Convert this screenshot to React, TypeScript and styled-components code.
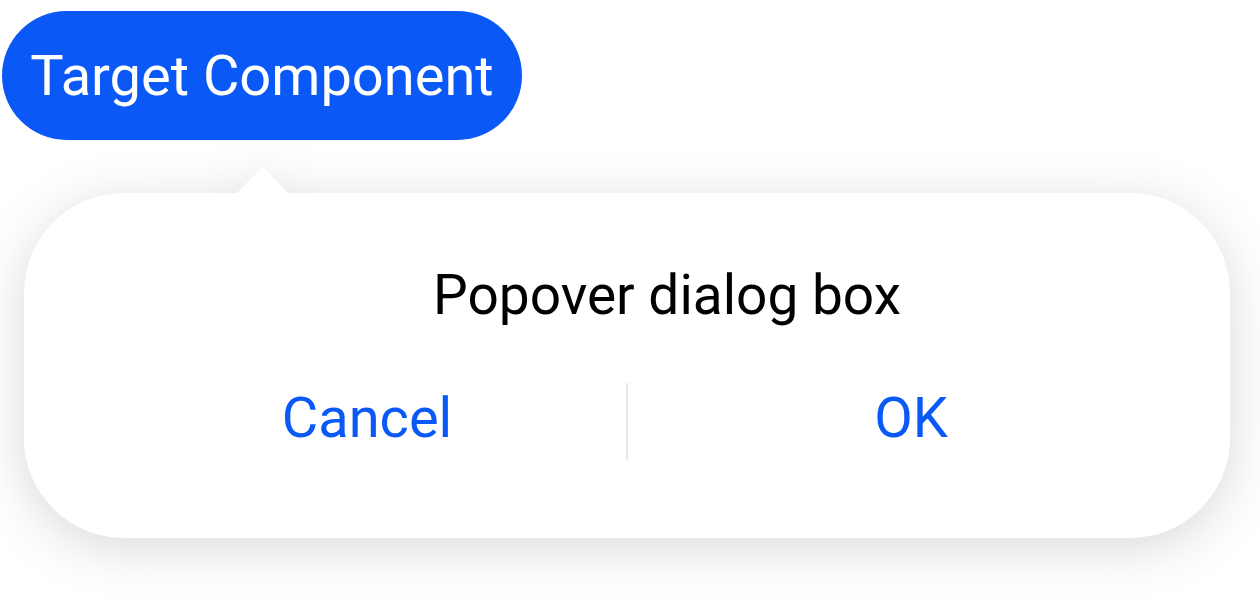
import styled, { createGlobalStyle } from 'styled-components';

const GlobalStyle = createGlobalStyle`
  body {
    margin: 0;
    background: #ffffff;
    font-family: Roboto, "Noto Sans", "Liberation Sans", sans-serif;
  }
`;

const Page = styled.div`
  min-height: 597px;
  box-sizing: border-box;
  padding: 11px 0 0 2px;
  display: flex;
  flex-direction: column;
  align-items: flex-start;
`;

const TargetButton = styled.button`
  width: 520px;
  height: 129px;
  border: none;
  border-radius: 65px;
  background: #0a59f7;
  color: #ffffff;
  font-family: inherit;
  font-size: 56px;
  padding: 0;
  cursor: pointer;
`;

const PopoverWrap = styled.div`
  position: relative;
  margin: 53px 0 0 22px;
  filter: drop-shadow(0 10px 26px rgba(0, 0, 0, 0.15));
`;

const Arrow = styled.div`
  position: absolute;
  top: -18px;
  left: 220px;
  width: 37px;
  height: 37px;
  background: #ffffff;
  border-top-left-radius: 4px;
  transform: rotate(45deg);
`;

const Card = styled.div`
  position: relative;
  width: 1206px;
  height: 345px;
  box-sizing: border-box;
  padding-top: 69px;
  background: #ffffff;
  border-radius: 100px;
`;

const Title = styled.div`
  padding: 0 24px 0 104px;
  text-align: center;
  font-size: 55px;
  line-height: 67px;
  color: #000000;
`;

const ButtonRow = styled.div`
  display: grid;
  grid-template-columns: 518px 2px 1fr;
  align-items: center;
  height: 77px;
  margin-top: 54px;
  padding: 0 36px 0 84px;
`;

const ActionButton = styled.button`
  border: none;
  background: transparent;
  color: #0a59f7;
  font-family: inherit;
  font-size: 56px;
  line-height: 67px;
  padding: 0;
  margin-bottom: 6px;
  cursor: pointer;
`;

const Divider = styled.div`
  width: 2px;
  height: 77px;
  background: #e8e8e8;
`;

export default function App() {
  return (
    <>
      <GlobalStyle />
      <Page>
        <TargetButton>Target Component</TargetButton>
        <PopoverWrap>
          <Arrow />
          <Card>
            <Title>Popover dialog box</Title>
            <ButtonRow>
              <ActionButton>Cancel</ActionButton>
              <Divider />
              <ActionButton>OK</ActionButton>
            </ButtonRow>
          </Card>
        </PopoverWrap>
      </Page>
    </>
  );
}
